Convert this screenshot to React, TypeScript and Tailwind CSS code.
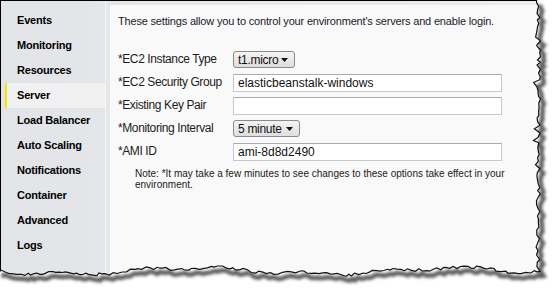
import React from "react";

const menu = [
  "Events",
  "Monitoring",
  "Resources",
  "Server",
  "Load Balancer",
  "Auto Scaling",
  "Notifications",
  "Container",
  "Advanced",
  "Logs",
];

// jagged "torn paper" edge along the right and bottom side
const tornEdge = () => {
  let s = 11;
  const rnd = () => {
    s = (s * 16807) % 2147483647;
    return s / 2147483647;
  };
  const pts: [number, number][] = [];
  for (let y = 0; y <= 268; y += 2 + rnd() * 3) {
    pts.push([538.5 + (rnd() - 0.5) * 4 + (rnd() < 0.15 ? -3 : 0), y]);
  }
  for (let x = 540; x >= 0; x -= 2 + rnd() * 3) {
    pts.push([x, 271 + 3 * Math.sin(x / 41) + 1.5 * Math.sin(x / 13) + (rnd() - 0.5) * 3]);
  }
  pts.push([-2, 272]);
  return pts;
};

const Edge = () => {
  const pts = tornEdge();
  const line = "M" + pts.map(([x, y]) => `${x.toFixed(1)},${y.toFixed(1)}`).join(" L");
  const outside = line + " L-2,290 L556,290 L556,-2 L538,-2 Z";
  return (
    <svg className="absolute inset-0 pointer-events-none" width={554} height={288} viewBox="0 0 554 288">
      <defs>
        <clipPath id="outside">
          <path d={outside} />
        </clipPath>
        <filter id="blur" x="-10%" y="-10%" width="120%" height="120%">
          <feGaussianBlur stdDeviation="1.5" />
        </filter>
      </defs>
      <path d={outside} fill="#ffffff" />
      <g clipPath="url(#outside)">
        <path d={line} transform="translate(3.5,4.5)" fill="none" stroke="#333" strokeOpacity={0.8} strokeWidth={4.5} filter="url(#blur)" />
      </g>
      <path d={line} fill="none" stroke="#111" strokeWidth={1.2} strokeLinejoin="miter" />
    </svg>
  );
};

const Select = ({ value, w }: { value: string; w: string }) => (
  <div className={`${w} h-[17px] flex items-center justify-between pl-[4px] pr-[6px] rounded-[3px] border border-[#8a8a8a] bg-gradient-to-b from-[#f4f4f4] to-[#dedede] text-[12px] tracking-[-0.3px] leading-none text-[#111]`}>
    <span>{value}</span>
    <svg width="7" height="4" viewBox="0 0 7 4">
      <path d="M0 0 L7 0 L3.5 4 Z" fill="#111" />
    </svg>
  </div>
);

const Input = ({ value = "" }: { value?: string }) => (
  <div className="w-[269px] h-[18px] flex items-center px-[4px] border border-[#c5c8ce] border-t-[#a9abb2] bg-white text-[12px] leading-none text-[#111]">
    {value}
  </div>
);

const Row = ({ label, children }: { label: string; children: React.ReactNode }) => (
  <div className="flex items-start h-[23px]">
    <div className="w-[115px] pt-[1px] text-[12px] tracking-[-0.4px] leading-[14px] text-[#1c1c1c]">{label}</div>
    {children}
  </div>
);

export default function App() {
  return (
    <div className="relative w-[554px] h-[288px] bg-white overflow-hidden font-['Liberation_Sans',Arial,sans-serif]">
      <div className="flex h-[288px] border-t border-l border-black bg-gradient-to-r from-[#e3e4e7] to-[#ecedf0]">
        <nav className="w-[104px] pt-[7px] flex flex-col">
          {menu.map((m) => (
            <div
              key={m}
              className={`h-[25px] flex items-center text-[11px] font-bold tracking-[-0.2px] text-black ${
                m === "Server" ? "bg-[#f1f1f2] border-l-[2px] border-[#f2e500] ml-[4px] pl-[10px]" : "pl-[16px]"
              }`}
            >
              {m}
            </div>
          ))}
        </nav>
        <div className="w-[1px] bg-[#f5f5f6]" />
        <div className="w-[4px] bg-[#e6e7ea]" />
        <main className="flex-1 mt-[4px] bg-[#f9f9f9] pl-[8px] pt-[10px]">
          <p className="text-[11px] tracking-[-0.18px] leading-[13px] text-[#1a1a2a]">
            These settings allow you to control your environment's servers and enable login.
          </p>
          <div className="mt-[23px] flex flex-col">
            <Row label="*EC2 Instance Type">
              <Select value="t1.micro" w="w-[62px]" />
            </Row>
            <Row label="*EC2 Security Group">
              <Input value="elasticbeanstalk-windows" />
            </Row>
            <Row label="*Existing Key Pair">
              <Input />
            </Row>
            <Row label="*Monitoring Interval">
              <Select value="5 minute" w="w-[67px]" />
            </Row>
            <Row label="*AMI ID">
              <Input value="ami-8d8d2490" />
            </Row>
          </div>
          <p className="mt-[2px] pl-[17px] w-[400px] text-[10px] leading-[11px] text-[#1a1a1a]">
            Note: *It may take a few minutes to see changes to these options take effect in your environment.
          </p>
        </main>
      </div>
      <Edge />
    </div>
  );
}
